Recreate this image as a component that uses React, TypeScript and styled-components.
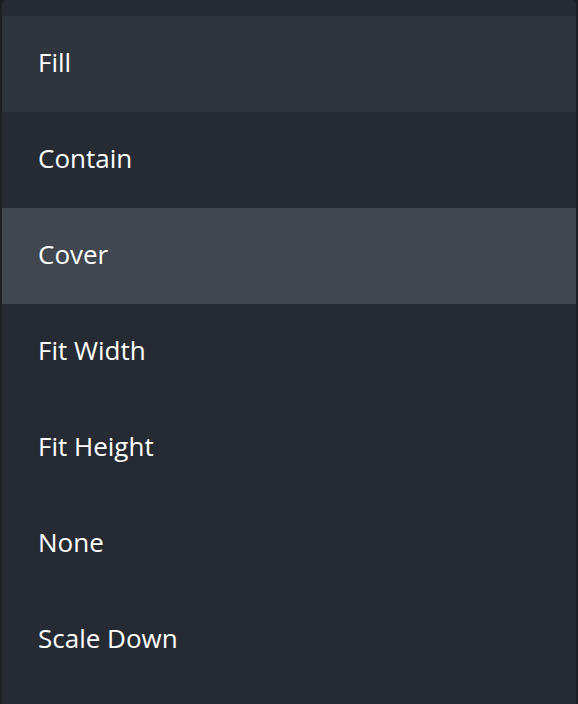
import styled, { createGlobalStyle } from "styled-components";

const GlobalStyle = createGlobalStyle`
  html, body {
    margin: 0;
    padding: 0;
    background: #1b1f24;
  }
`;

const items = [
  { label: "Fill", state: "hover" },
  { label: "Contain", state: "" },
  { label: "Cover", state: "active" },
  { label: "Fit Width", state: "" },
  { label: "Fit Height", state: "" },
  { label: "None", state: "" },
  { label: "Scale Down", state: "" },
];

function App() {
  return (
    <>
      <GlobalStyle />
      <Menu>
        {items.map((el) => (
          <Item key={el.label} $state={el.state}>
            {el.label}
          </Item>
        ))}
      </Menu>
    </>
  );
}
export default App;

const Menu = styled.div`
  box-sizing: border-box;
  width: 574px;
  height: 704px;
  margin-left: 2px;
  padding-top: 16px;
  background-color: #262b33;
  border-radius: 4px 4px 0 0;
  display: flex;
  flex-direction: column;
  overflow: hidden;
`;

const Item = styled.div<{ $state: string }>`
  box-sizing: border-box;
  height: 96px;
  flex-shrink: 0;
  display: flex;
  align-items: center;
  padding: 0 0 4px 36px;
  font-family: "Open Sans", sans-serif;
  font-size: 26px;
  font-weight: 500;
  color: #ffffff;
  background-color: ${(p) =>
    p.$state === "active"
      ? "#40474e"
      : p.$state === "hover"
      ? "#2f353d"
      : "transparent"};
`;
